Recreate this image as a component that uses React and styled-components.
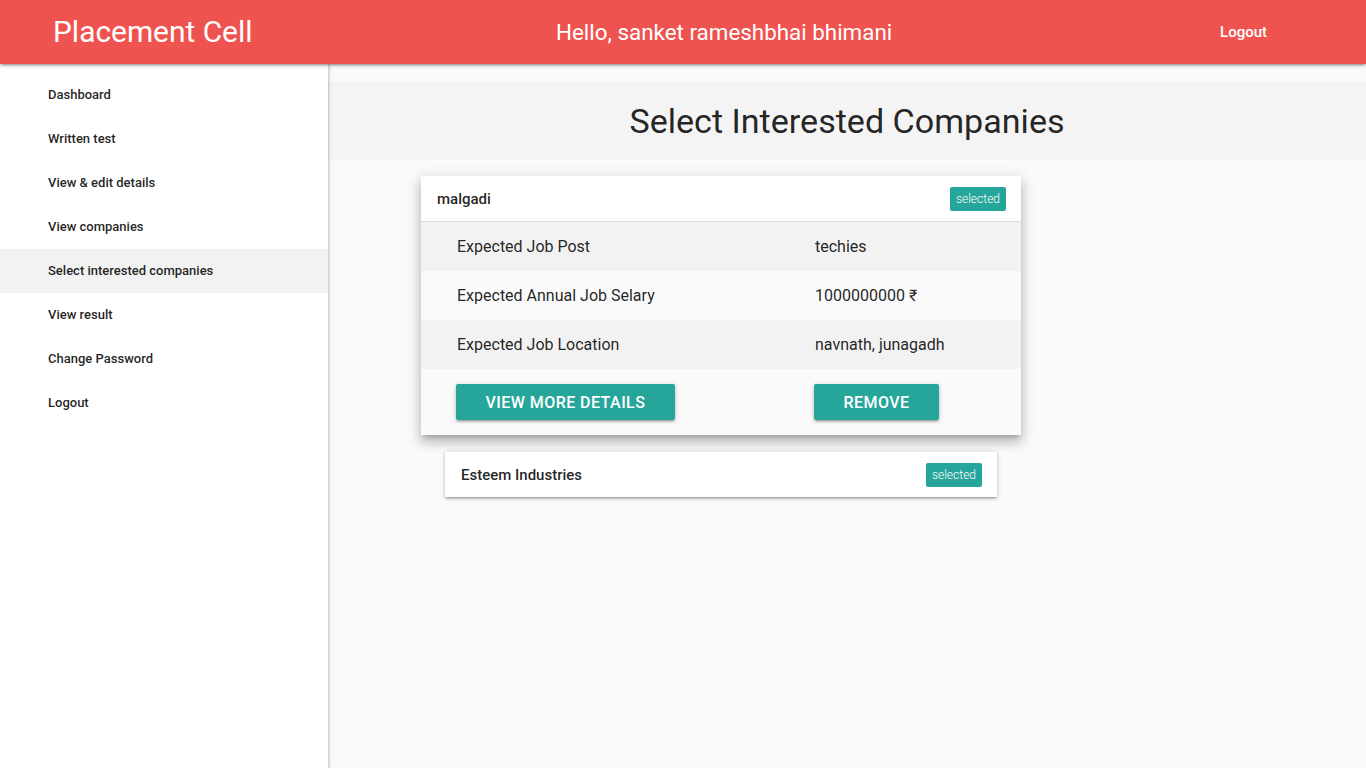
import React from "react";
import styled, { createGlobalStyle } from "styled-components";

const Global = createGlobalStyle`
  * { box-sizing: border-box; }
  html, body { margin: 0; padding: 0; height: 100%; }
  body {
    font-family: Roboto, "Noto Sans", sans-serif;
    background: #fafafa;
    color: rgba(0,0,0,0.87);
  }
`;

const Page = styled.div`
  min-height: 768px;
  display: flex;
  flex-direction: column;
`;

const NavBar = styled.header`
  position: relative;
  z-index: 3;
  height: 64px;
  background: #ef5350;
  color: #fff;
  display: grid;
  grid-template-columns: 556px auto 1fr;
  align-items: center;
  box-shadow: 0 2px 2px 0 rgba(0,0,0,0.14), 0 3px 1px -2px rgba(0,0,0,0.12), 0 1px 5px 0 rgba(0,0,0,0.2);
`;

const Brand = styled.div`
  padding-left: 53px;
  font-size: 29.9px;
  font-weight: 400;
  line-height: 64px;
`;

const Greeting = styled.div`
  font-size: 22.4px;
  font-weight: 400;
`;

const NavLink = styled.a`
  justify-self: end;
  padding-right: 99px;
  font-size: 15px;
  font-weight: 500;
  color: #fff;
  text-decoration: none;
`;

const Body = styled.div`
  flex: 1;
  display: flex;
`;

const SideNav = styled.nav`
  position: relative;
  z-index: 2;
  width: 328px;
  flex: 0 0 328px;
  background: #fff;
  padding-top: 9px;
  box-shadow: 1px 0 2px rgba(0,0,0,0.18), 2px 0 4px rgba(0,0,0,0.06);
  min-height: 704px;
`;

const SideItem = styled.a`
  display: block;
  height: 44px;
  line-height: 44px;
  padding-left: 48px;
  font-size: 13px;
  font-weight: 500;
  color: rgba(0,0,0,0.87);
  text-decoration: none;
  background: ${p => (p.$active ? "#f2f2f2" : "transparent")};
`;

const Main = styled.main`
  flex: 1;
  padding-top: 18px;
`;

const TitleBand = styled.div`
  height: 78px;
  background: #f4f4f4;
  display: flex;
  align-items: center;
  justify-content: center;
`;

const Title = styled.h4`
  margin: 0;
  font-size: 34.1px;
  font-weight: 400;
  color: rgba(0,0,0,0.87);
`;

const List = styled.ul`
  list-style: none;
  margin: 16px 0 0 93px;
  padding: 0;
  width: 600px;
  display: flex;
  flex-direction: column;
  gap: 17px;
`;

const Item = styled.li`
  margin: ${p => (p.$open ? "0" : "0 24px")};
  background: #fff;
  box-shadow: ${p =>
    p.$open
      ? "0 8px 10px 1px rgba(0,0,0,0.14), 0 3px 14px 2px rgba(0,0,0,0.12), 0 5px 5px -3px rgba(0,0,0,0.2)"
      : "0 2px 2px 0 rgba(0,0,0,0.14), 0 3px 1px -2px rgba(0,0,0,0.12), 0 1px 5px 0 rgba(0,0,0,0.2)"};
`;

const ItemHeader = styled.div`
  box-sizing: content-box;
  height: 45px;
  padding: 0 15px 0 16px;
  display: flex;
  align-items: center;
  justify-content: space-between;
  border-bottom: ${p => (p.$open ? "1px solid #ddd" : "none")};
  font-size: 15px;
  font-weight: 500;
  color: rgba(0,0,0,0.87);
`;

const Badge = styled.span`
  height: 24px;
  line-height: 24px;
  padding: 0 6px;
  border-radius: 2px;
  background: #26a69a;
  color: #fff;
  font-size: 12px;
  font-weight: 300;
`;

const Row = styled.div`
  display: grid;
  grid-template-columns: 394px 1fr;
  height: 49px;
  align-items: center;
  background: ${p => (p.$odd ? "#f2f2f2" : "#fafafa")};
  font-size: 16px;
  font-weight: 400;
  color: rgba(0,0,0,0.87);
`;

const Label = styled.span`
  padding-left: 36px;
`;

const Actions = styled.div`
  display: grid;
  grid-template-columns: 358px 1fr;
  align-items: center;
  height: 66px;
  padding-left: 35px;
  background: #fafafa;
`;

const Button = styled.button`
  justify-self: start;
  height: 36px;
  padding: 0 29.5px;
  border: none;
  border-radius: 2px;
  background: #26a69a;
  color: #fff;
  font-family: Roboto, sans-serif;
  font-size: 16px;
  font-weight: 500;
  text-transform: uppercase;
  letter-spacing: 0.45px;
  box-shadow: 0 2px 2px 0 rgba(0,0,0,0.14), 0 3px 1px -2px rgba(0,0,0,0.12), 0 1px 5px 0 rgba(0,0,0,0.2);
`;

const nav = [
  "Dashboard",
  "Written test",
  "View & edit details",
  "View companies",
  "Select interested companies",
  "View result",
  "Change Password",
  "Logout",
];

const rows = [
  ["Expected Job Post", "techies"],
  ["Expected Annual Job Selary", "1000000000 ₹"],
  ["Expected Job Location", "navnath, junagadh"],
];

export default function App() {
  return (
    <>
      <Global />
      <Page>
        <NavBar>
          <Brand>Placement Cell</Brand>
          <Greeting>Hello, sanket rameshbhai bhimani</Greeting>
          <NavLink href="#">Logout</NavLink>
        </NavBar>
        <Body>
          <SideNav>
            {nav.map(n => (
              <SideItem key={n} href="#" $active={n === "Select interested companies"}>
                {n}
              </SideItem>
            ))}
          </SideNav>
          <Main>
            <TitleBand>
              <Title>Select Interested Companies</Title>
            </TitleBand>
            <List>
              <Item $open>
                <ItemHeader $open>
                  <span>malgadi</span>
                  <Badge>selected</Badge>
                </ItemHeader>
                {rows.map(([l, v], i) => (
                  <Row key={l} $odd={i % 2 === 0}>
                    <Label>{l}</Label>
                    <span>{v}</span>
                  </Row>
                ))}
                <Actions>
                  <Button>View more details</Button>
                  <Button>Remove</Button>
                </Actions>
              </Item>
              <Item>
                <ItemHeader>
                  <span>Esteem Industries</span>
                  <Badge>selected</Badge>
                </ItemHeader>
              </Item>
            </List>
          </Main>
        </Body>
      </Page>
    </>
  );
}
